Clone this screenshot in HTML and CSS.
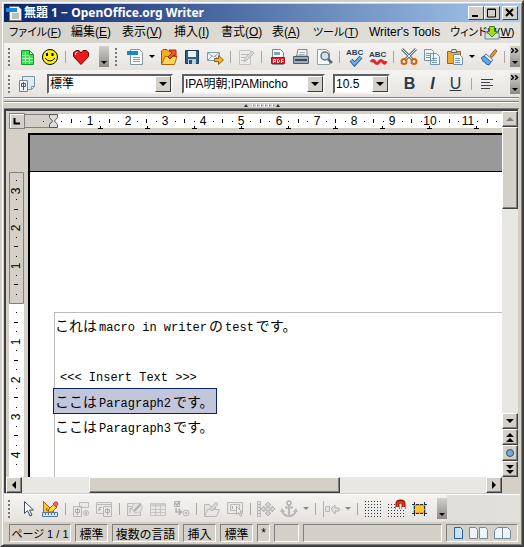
FILE: index.html
```html
<!DOCTYPE html>
<html lang="ja">
<head>
<meta charset="utf-8">
<title>無題 1 - OpenOffice.org Writer</title>
<link rel="stylesheet" href="styles.css">
</head>
<body>
<div class="window">
  <header class="titlebar">
    <svg class="app-icon" width="16" height="16" viewBox="0 0 16 16"><path d="M3.500 1.500h9l3 3v11h-12z" fill="#f4f4f4" stroke="#777"/><path d="M0 3h11v4H0z" fill="#1690d8"/><path d="M6 9h7M6 11h7M6 13h7" stroke="#888"/></svg>
    <h1>無題 1 − OpenOffice.org Writer</h1>
    <div class="window-buttons">
      <button aria-label="最小化"><svg width="12" height="10"><path d="M2 8h6" stroke="#000" stroke-width="2"/></svg></button>
      <button aria-label="最大化"><svg width="12" height="10"><path d="M1.500 1v8h8V1zM1 1.500h9" fill="none" stroke="#000"/></svg></button>
      <button class="close" aria-label="閉じる"><svg width="12" height="10"><path d="M2 1l7 7M9 1L2 8" stroke="#000" stroke-width="2"/></svg></button>
    </div>
  </header>

  <nav class="menubar">
    <button class="kana">ファイル(<u>F</u>)</button><button>編集(<u>E</u>)</button><button>表示(<u>V</u>)</button><button>挿入(<u>I</u>)</button><button>書式(<u>O</u>)</button><button>表(<u>A</u>)</button><button class="kana">ツール(<u>T</u>)</button><button>Writer's Tools</button><button class="kana">ウィンドウ(<u>W</u>)</button>
    <svg class="update" width="16" height="14" viewBox="0 0 16 14"><path d="M1 7h14v6H1z" fill="#d9e1e5" stroke="#71838d"/><path d="M5.500.500h5v5h3L8 11 2.500 5.500h3z" fill="#a5d820" stroke="#3d8a18"/></svg>
  </nav>

  <div class="toolbar">
    <span class="grip"></span>
    <button aria-label="マクロ"><svg viewBox="0 0 20 20"><path d="M4.500 3.500h8l4 4v10h-12z" fill="#35e24b" stroke="#159a2b"/><path d="M12.500 3.500v4h4z" fill="#fff" stroke="#159a2b"/><path d="M5 8.500h7M5 11.500h11M5 14.500h11M8.500 5v12M12.500 9v8" stroke="#b8ffc0"/></svg></button>
    <button aria-label="スマイル"><svg viewBox="0 0 20 20"><circle cx="10" cy="10" r="7.500" fill="#fff200" stroke="#000"/><path d="M7 6v3M12.500 6v3" stroke="#000" stroke-width="2"/><path d="M5 11q5 6 10 0" fill="none" stroke="#000"/></svg></button>
    <span class="sep"></span>
    <button aria-label="ハート"><svg viewBox="0 0 20 20"><path d="M10 17.500L2.500 9.500V5.500l3-2h2.500L10 6l2-2.500h3l2.500 2v4z" fill="#f01818" stroke="#5a0000"/><path d="M4.500 8V6l2-1" fill="none" stroke="#fff"/></svg></button>
    <button class="overflow push" aria-label="オプション"><i></i></button>
    <span class="grip second"></span>
    <button aria-label="新規作成"><svg viewBox="0 0 20 20"><path d="M5.500 2.500h9l3 3v12h-12z" fill="#fafcfd" stroke="#8795a0"/><path d="M2 4h11v4H2z" fill="#1687ca"/><path d="M8 10.500h7M8 12.500h7M8 14.500h7" stroke="#8d9aa5"/></svg></button>
    <button class="drop" aria-label="新規作成の一覧"><i></i></button>
    <button aria-label="開く"><svg viewBox="0 0 20 20"><path d="M2.500 17V4l1.500-1.500h4l2 2h4V17z" fill="#f5ab24" stroke="#97560b"/><path d="M2.500 17.500L6 9.500h12l-2.500 8z" fill="#ffd65b" stroke="#ac6a0c"/><path d="M10 3h7v7l-2-2-4 4-2-2 4-4z" fill="#ea5a20" stroke="#a12d0c"/></svg></button>
    <button aria-label="保存"><svg viewBox="0 0 20 20"><path d="M3.500 3.500h13v13h-13z" fill="#2d5e83" stroke="#173b59"/><path d="M6 4h8v6H6z" fill="#e9f1f5"/><path d="M6 12h8v5H6z" fill="#bcd0dc"/><path d="M7 13h3v4H7z" fill="#28506e"/></svg></button>
    <button aria-label="メールで送信"><svg viewBox="0 0 20 20"><path d="M2.500 5.500h12v8h-12z" fill="#edf4fa" stroke="#8198ae"/><path d="M3 6l5.500 4L14 6M3 13l4-4M14 13l-4-4" fill="none" stroke="#8ea6bc"/><path d="M9.500 11.500h4v-3l5 4.500-5 4.500v-3h-4z" fill="#fbb526" stroke="#94600f"/></svg></button>
    <span class="sep"></span>
    <button disabled aria-label="編集"><svg class="dim" viewBox="0 0 20 20"><path d="M3.500 3.500h11v14h-11z" fill="#eee" stroke="#aaa"/><path d="M5 7.500h7M5 10.500h5M5 13.500h4" stroke="#999"/><path d="M8 15l1-4 7-7 2 2-7 7z" fill="#ccc" stroke="#999"/></svg></button>
    <span class="sep wide"></span>
    <button aria-label="PDF"><svg viewBox="0 0 20 20"><path d="M4.500 2.500h8l3 3v12h-11z" fill="#f5f8fa" stroke="#7b8b97"/><path d="M6 5h6v3H6z" fill="#8aa2b2"/><path d="M3.500 10.500h13v6h-13z" fill="#e11d25" stroke="#b4101a"/><path d="M5.500 16v-3.500h2v2h-2M9.500 16v-3.500h1l1 1v1l-1 1h-1M13.500 16v-3.500h2M13.500 14.500h2" fill="none" stroke="#fff"/></svg></button>
    <button aria-label="印刷"><svg viewBox="0 0 20 20"><path d="M5.500 9L7 2.500h9V9z" fill="#f7f9fa" stroke="#778993"/><path d="M2.500 9.500h15v7h-15z" fill="#9cabb4" stroke="#4b5e69"/><path d="M4 12h12v2H4z" fill="#384a55"/><path d="M8 5.500h6M7.500 7.500h6" stroke="#a6b4bb"/></svg></button>
    <button aria-label="プレビュー"><svg viewBox="0 0 20 20"><path d="M3.500 2.500h9l3 3v12h-12z" fill="#f8fafb" stroke="#91a1ac"/><circle cx="11" cy="9" r="4" fill="#cfe3ef" stroke="#5e7481" stroke-width="1.500"/><path d="M14 12l4 4" stroke="#526b7d" stroke-width="2.500"/></svg></button>
    <span class="sep"></span>
    <button aria-label="スペルチェック"><svg viewBox="0 0 20 20"><text x="1" y="8" class="abc">ABC</text><path d="M6 13l3.500 4L16 10" fill="none" stroke="#205a95" stroke-width="4"/><path d="M6 13l3.500 4L16 10" fill="none" stroke="#72b5ec" stroke-width="2"/></svg></button>
    <button aria-label="自動スペルチェック"><svg viewBox="0 0 20 20"><text x="1" y="10" class="abc">ABC</text><path d="M3 15q2-3 4 0t4 0 4 0 3-1" fill="none" stroke="#e3242d" stroke-width="3"/></svg></button>
    <span class="sep"></span>
    <button aria-label="切り取り"><svg viewBox="0 0 20 20"><path d="M3 2l11 11M17 2L6 13" stroke="#69757c" stroke-width="3"/><path d="M3 2l11 11M17 2L6 13" stroke="#e3e9ec"/><circle cx="5" cy="14.500" r="2.500" fill="none" stroke="#d2660c" stroke-width="2"/><circle cx="15" cy="14.500" r="2.500" fill="none" stroke="#d2660c" stroke-width="2"/></svg></button>
    <button aria-label="コピー"><svg viewBox="0 0 20 20"><path d="M2.500 2.500h7l2 2v9h-9zM8.500 6.500h6l3 3v8h-9z" fill="#edf4f8" stroke="#7794a8"/><path d="M4 6.500h5M4 8.500h4M4 10.500h4M10 11.500h5M10 13.500h5M10 15.500h5" stroke="#749bb9"/></svg></button>
    <button aria-label="貼り付け"><svg viewBox="0 0 20 20"><path d="M2.500 4.500h13v12h-13z" fill="#efa92c" stroke="#9a631a"/><path d="M6 5.500l1-3h4l1 3z" fill="#ddd" stroke="#6b6b6b"/><path d="M8.500 7.500h6l3 3v7h-9z" fill="#eff5f8" stroke="#6d8fa8"/><path d="M10 11.500h5M10 13.500h5M10 15.500h5" stroke="#749bb9"/></svg></button>
    <button class="drop" aria-label="貼り付けの一覧"><i></i></button>
    <button aria-label="書式のコピー"><svg viewBox="0 0 20 20"><path d="M11 9l5-6.500 2 1.500-5 6.500z" fill="#e3a04b" stroke="#8b5b27"/><path d="M7 7l7 6-2 2-7-6z" fill="#e4edf2" stroke="#637b8a"/><path d="M5 9l7 6-2 3-3-1-1-2-2-.500-1-2.500-1-1z" fill="#5da8e5" stroke="#2767a3"/></svg></button>
    <span class="sep"></span>
    <button class="overflow end" aria-label="その他"><svg class="more" viewBox="0 0 8 5"><path d="M0 0l2.500 2.500L0 5M4 0l2.500 2.500L4 5" fill="none" stroke="#000" stroke-width="1.500"/></svg><i></i></button>
  </div>

  <div class="toolbar format">
    <span class="grip"></span>
    <button aria-label="スタイル"><svg viewBox="0 0 20 20"><path d="M5.500 2.500h12v10l-3 3h-9z" fill="#dfeaf1" stroke="#7b94a6"/><path d="M14.500 15.500v-3h3z" fill="#fff" stroke="#7b94a6"/><path d="M2.500 6.500h8v11h-8z" fill="#eff2f4" stroke="#7a8791"/><path d="M6.500 8v8M4.500 9.500h4v3h-4z" fill="none" stroke="#4c5d69"/></svg></button>
    <label class="combo style"><select aria-label="段落スタイル"><option>標準</option></select><i></i></label>
    <label class="combo font"><select aria-label="フォント名"><option>IPA明朝;IPAMincho</option></select><i></i></label>
    <label class="combo size"><select aria-label="フォントサイズ"><option>10.5</option></select><i></i></label>
    <button class="letter push" aria-label="太字"><b>B</b></button>
    <button class="letter" aria-label="斜体"><em>I</em></button>
    <button class="letter" aria-label="下線"><u>U</u></button>
    <span class="sep"></span>
    <button aria-label="左揃え"><svg viewBox="0 0 20 20"><path d="M4 5.500h12M4 8.500h9M4 11.500h12M4 14.500h9" stroke="#39444e"/></svg></button>
    <button class="overflow end" aria-label="その他"><svg class="more" viewBox="0 0 8 5"><path d="M0 0l2.500 2.500L0 5M4 0l2.500 2.500L4 5" fill="none" stroke="#000" stroke-width="1.500"/></svg><i></i></button>
  </div>

  <div class="splitter"><svg width="36" height="5" viewBox="0 0 36 5"><path d="M0 4l2-3 2 3zM32 4l2-3 2 3z" fill="#333"/><path d="M8 2.500h22" stroke="#fff" stroke-width="3" stroke-dasharray="2 2"/><path d="M9 2.500h22" stroke="#777" stroke-width="2" stroke-dasharray="1 3"/></svg></div>

  <main class="editor">
    <div class="ruler-row">
      <button class="tab-kind" aria-label="左揃えタブ"><svg width="8" height="7"><path d="M1.500 0v5.500H7" fill="none" stroke="#000" stroke-width="2"/></svg></button>
      <div class="h-ruler"><svg id="h-ruler" height="18"></svg></div>
    </div>
    <div class="v-ruler"><svg id="v-ruler" width="15"></svg></div>
    <article class="canvas">
      <div class="page">
        <div class="text-area">
          <p>これは<span>macro in writer</span>の<span>test</span>です。</p>
          <p></p>
          <p><code>&lt;&lt;&lt; Insert Text &gt;&gt;&gt;</code></p>
          <p class="boxed">ここは<span>Paragraph2</span>です。</p>
          <p>ここは<span>Paragraph3</span>です。</p>
        </div>
      </div>
    </article>
    <div class="v-scroll">
      <button class="up off" aria-label="上へ"><i></i></button>
      <div class="thumb"></div>
      <div class="trough"></div>
      <button class="down" aria-label="下へ"><i></i></button>
      <button class="up" aria-label="前のページ"><i></i><i></i></button>
      <button aria-label="ナビゲーション"><b class="ball"></b></button>
      <button class="down" aria-label="次のページ"><i></i><i></i></button>
    </div>
    <div class="h-scroll">
      <button class="left" aria-label="左へ"><i></i></button>
      <div class="trough before"></div>
      <div class="thumb"></div>
      <div class="trough"></div>
      <button class="right" aria-label="右へ"><i></i></button>
    </div>
  </main>

  <div class="toolbar drawing">
    <div class="strip">
    <span class="grip"></span>
    <button aria-label="選択"><svg viewBox="0 0 20 20"><path d="M7.500 2.500v12l3-3 2.500 5.500 2-1-2.500-5h4z" fill="#fff" stroke="#3f4d5c"/></svg></button>
    <button aria-label="デザインモード"><svg viewBox="0 0 20 20"><path d="M3.500 2.500v12h12z" fill="#ffc42e" stroke="#b0650d"/><path d="M6.500 9v2.500H9z" fill="#fff" stroke="#b0650d"/><path d="M2.500 13.500h15v4h-15z" fill="#cee3f2" stroke="#527b9d"/><path d="M5.500 14v2M8.500 14v2M11.500 14v2M14.500 14v2" stroke="#527b9d"/><path d="M8 13l1-3 5-5 3 3-5 5z" fill="#ffd53d" stroke="#a4620e"/><path d="M13 5l2-2h2l1 2-2 3z" fill="#ef6a72" stroke="#b5414a"/></svg></button>
    <span class="sep"></span>
    <button disabled aria-label="コントロール"><svg class="dim" viewBox="0 0 20 20"><path d="M8.500 3.500h9v5h-9zM2.500 7.500h8v10h-8z" fill="#e8e8e8" stroke="#999"/><path d="M6.500 9v7M4.500 10.500h4v3h-4z" fill="none" stroke="#888"/><circle cx="15" cy="14" r="2.500" fill="#ddd" stroke="#999"/><circle cx="15" cy="14" r="1" fill="#888"/></svg></button>
    <button disabled aria-label="フォーム"><svg class="dim" viewBox="0 0 20 20"><path d="M2.500 3.500h15v11h-15zM2 5.500h16" fill="#e8e8e8" stroke="#999"/><path d="M5 12V8.500h3M5 10.500h2" fill="none" stroke="#888"/><path d="M9.500 7.500h8v10h-8z" fill="#e8e8e8" stroke="#999"/><path d="M13.500 9v7M11.500 10.500h4v3h-4z" fill="none" stroke="#888"/></svg></button>
    <span class="sep"></span>
    <button disabled aria-label="フォームナビゲータ"><svg class="dim" viewBox="0 0 20 20"><path d="M2.500 4.500h13v12h-13zM2 7.500h13" fill="#e5e5e5" stroke="#999"/><path d="M5 14v-4.500h3" fill="none" stroke="#888"/><circle cx="12" cy="9" r="5" fill="#ddd" stroke="#aaa"/><path d="M9 12l7-7" stroke="#888" stroke-width="2"/></svg></button>
    <button disabled aria-label="表"><svg class="dim" viewBox="0 0 20 20"><path d="M2.500 4.500h15v12h-15z" fill="#e9e9e9" stroke="#aaa"/><path d="M3 6h14" stroke="#bbb" stroke-width="3"/><path d="M3 10.500h14M3 13.500h14M7.500 5v12M12.500 5v12" stroke="#aaa"/></svg></button>
    <button disabled aria-label="順序"><svg class="dim" viewBox="0 0 20 20"><path d="M3.500 2.500h5v5h-5z" fill="#eee" stroke="#888"/><path d="M4 4l2 2 3-4M5 9v4h5M7.500 10l3 3-3 3" fill="none" stroke="#888" stroke-width="1.500"/><circle cx="15" cy="14" r="3" fill="#ddd" stroke="#999"/><circle cx="15" cy="14" r="1" fill="#888"/></svg></button>
    <span class="sep"></span>
    <button disabled aria-label="デザインモードで開く"><svg class="dim" viewBox="0 0 20 20"><path d="M2.500 16.500v-11h5l1 2h5v10z" fill="#ddd" stroke="#999"/><path d="M2.500 17.500l3-7h12l-3 7z" fill="#e5e5e5" stroke="#999"/><path d="M8 10l6-7 2 2-6 7z" fill="#ccc" stroke="#999"/></svg></button>
    <button disabled aria-label="自動フォーカス"><svg class="dim" viewBox="0 0 20 20"><path d="M2.500 3.500h15v11h-15zM5.500 5.500h9v6h-9z" fill="#e8e8e8" stroke="#999"/><path d="M7.500 7v3" stroke="#888"/><path d="M11.500 7.500v8l2-2 2 4 1.500-1-2-3.500h2z" fill="#eee" stroke="#888"/></svg></button>
    <span class="sep"></span>
    <button disabled aria-label="位置とサイズ"><svg class="dim" viewBox="0 0 20 20"><path d="M1.500 2.500h3v15h-3z" fill="#ddd" stroke="#999"/><path d="M2 5.500h2M2 8.500h2M2 11.500h2M2 14.500h2" stroke="#888"/><path d="M12 3l3 3h-2v3h3V7l3 3-3 3v-2h-3v3h2l-3 3-3-3h2v-3H8v2l-3-3 3-3v2h3V6H9z" fill="#ccc" stroke="#888"/></svg></button>
    <button disabled aria-label="アンカー"><svg class="dim" viewBox="0 0 20 20"><circle cx="10" cy="4" r="2" fill="none" stroke="#888" stroke-width="1.500"/><path d="M10 6v11M6 8.500h8M3 11q1 6 7 6t7-6" fill="none" stroke="#999" stroke-width="2"/><path d="M1 13l2-4 3 4zM14 13l3-4 2 4z" fill="#999"/></svg></button>
    <button class="drop faded" disabled aria-label="アンカーの一覧"><i></i></button>
    <span class="sep"></span>
    <button disabled aria-label="配置"><svg class="dim" viewBox="0 0 20 20"><path d="M2.500 2v16" stroke="#888"/><path d="M4.500 7.500h4v5h-4z" fill="#ddd" stroke="#999"/><path d="M10 10l4-4v3h4v3h-4v3z" fill="#ddd" stroke="#888"/></svg></button>
    <button class="drop faded" disabled aria-label="配置の一覧"><i></i></button>
    <span class="sep"></span>
    <button aria-label="グリッドの表示"><svg viewBox="0 0 20 20"><path d="M2 2.500h17M2 5.500h17M2 8.500h17M2 11.500h17M2 14.500h17M2 17.500h17" stroke="#2e3b49" stroke-dasharray="1 2"/></svg></button>
    <button aria-label="グリッドで位置合わせ"><svg viewBox="0 0 20 20"><path d="M2 5.500h8M2 8.500h8M2 11.500h17M2 14.500h17M2 17.500h17" stroke="#2e3b49" stroke-dasharray="1 2"/><path d="M11.500 10V4.500q0-2 3-2t3 2V10" fill="none" stroke="#8c1206" stroke-width="4"/><path d="M11.500 9V4.500q0-1.500 3-1.500t3 1.500V9" fill="none" stroke="#ee3416" stroke-width="2"/><path d="M10 9h3M16 9h3" stroke="#fff" stroke-width="2"/></svg></button>
    <button aria-label="ガイド"><svg viewBox="0 0 20 20"><path d="M5 6h11v8H5z" fill="#ffc62b" stroke="#e67b17"/><path d="M3 5.500h15M3 14.500h15M5.500 3v14M15.500 3v14" stroke="#22303d" stroke-dasharray="3 1"/></svg></button>
    <button class="overflow push" aria-label="オプション"><i></i></button>
    </div>
  </div>

  <footer class="statusbar">
    <span class="kana">ページ 1 / 1</span><span>標準</span><span>複数の言語</span><span>挿入</span><span>標準</span><span>*</span><span></span><span></span>
    <span class="views"><svg width="64" height="12" viewBox="0 0 64 12"><g fill="#edf4fa" stroke="#76899a"><path d="M4.500.500h6l2 2v9h-8z" fill="#c9e1fa" stroke="#245f9d"/><path d="M19.500.500h6l2 2v9h-8zM29.500.500h6l2 2v9h-8zM52.500.500h-5l-3 3v8h8zM52.500.500h5l3 3v8h-8z"/></g></svg></span>
  </footer>
</div>
<script src="rulers.js"></script>
</body>
</html>
```
FILE: styles.css
```css
* { box-sizing: border-box; }
body {
  margin: 0;
  font: 12px "Liberation Sans", "Noto Sans CJK JP", sans-serif;
  color: #000;
}
button { font: inherit; color: inherit; border: 0; padding: 0; background: none; }
svg { display: block; flex: none; }
i { display: block; width: 0; height: 0; }

.window {
  height: 100vh;
  min-height: 320px;
  display: flex;
  flex-direction: column;
  padding: 2px;
  background: #d4d0c8;
  border: 2px solid;
  border-color: #d4d0c8 #404040 #404040 #d4d0c8;
  box-shadow: inset 1px 1px #fff, inset -1px -1px #808080;
}

.titlebar {
  flex: none;
  height: 18px;
  display: flex;
  align-items: center;
  padding: 0 2px;
  background: linear-gradient(to right, #0a246a, #a6caf0);
  color: #fff;
}
.titlebar h1 {
  flex: 1;
  margin: 0 0 0 2px;
  font: bold 12px/18px "Noto Sans", "Noto Sans CJK JP", sans-serif;
  white-space: nowrap;
}
.window-buttons { display: flex; }
.window-buttons button {
  width: 16px;
  height: 14px;
  padding: 1px;
  background: #d4d0c8;
  border: 1px solid;
  border-color: #fff #404040 #404040 #fff;
}
.window-buttons .close { margin-left: 2px; }

.menubar {
  flex: none;
  position: relative;
  height: 21px;
  display: grid;
  grid-template-columns: 62px 51px 52px 47px 51px 41px 56px 81px 1fr;
  padding-left: 5px;
  background: linear-gradient(to right, #d6d3cb, #e4e2dd);
  font-feature-settings: "palt";
}
.menubar button { text-align: left; white-space: nowrap; line-height: 21px; overflow: hidden; }
.menubar .kana, .statusbar .kana { font-size: 11px; }
.update { position: absolute; right: 20px; top: 4px; }

.toolbar {
  flex: none;
  height: 27px;
  display: flex;
  align-items: center;
  background: linear-gradient(#f5f3f1, #e6e3df);
}
.toolbar button { flex: none; width: 23px; height: 23px; display: flex; align-items: center; justify-content: center; }
.toolbar button svg { width: 20px; height: 20px; }
.toolbar .grip {
  flex: none;
  width: 2px;
  height: 18px;
  margin: 0 5px 0 4px;
  background: repeating-linear-gradient(#777 0 2px, transparent 2px 4px);
}
.toolbar .second { margin: 0 6px; }
.toolbar .sep { flex: none; width: 1px; height: 12px; margin: 0 3px 0 4px; background: #aaa7a3; }
.toolbar .wide { margin-right: 4px; }
.toolbar .drop { width: 11px; }
.drop i, .overflow i { border: 3px solid transparent; border-top-color: #000; border-bottom: 0; }
.faded i { border-top-color: #888; }
.toolbar .overflow {
  width: 10px;
  height: 21px;
  flex-direction: column;
  justify-content: flex-end;
  padding-bottom: 3px;
  background: linear-gradient(#d2cfcc, #8d8b88);
}
.toolbar .end { margin-left: auto; gap: 8px; }
.toolbar .overflow .more { width: 8px; height: 5px; }
.toolbar .push { margin-left: 7px; }
.dim { opacity: 0.6; }
.abc { font: bold 8px "Liberation Sans", sans-serif; fill: #263f55; }

.format button:first-of-type { margin-right: 9px; }
.combo {
  position: relative;
  flex: 0 1 auto;
  height: 20px;
  border: 2px solid;
  border-color: #606060 #f4f4f4 #f4f4f4 #606060;
  background: #fff;
}
.combo.style { width: 126px; margin-right: 9px; }
.combo.font { width: 143px; margin-right: 8px; }
.combo.size { width: 57px; }
.combo select {
  display: block;
  width: 100%;
  height: 16px;
  padding: 0 18px 0 1px;
  border: 0;
  appearance: none;
  background: none;
  font: inherit;
  font-feature-settings: "palt";
  color: #000;
}
.combo i {
  position: absolute;
  right: 0;
  top: 0;
  width: 16px;
  height: 16px;
  pointer-events: none;
  background: #d4d0c8;
  border: 1px solid;
  border-color: #fff #404040 #404040 #fff;
}
.combo i::after {
  content: "";
  display: block;
  margin: 5px 3px;
  border: 4px solid transparent;
  border-top-color: #000;
  border-bottom: 0;
}
.format .letter { font: 16px "Liberation Sans", sans-serif; color: #2d3947; }
.format em { font-weight: bold; }
.format .push { margin-left: 8px; }

.splitter {
  flex: none;
  height: 12px;
  margin-right: 1px;
  padding-top: 4px;
  display: flex;
  justify-content: center;
  background: linear-gradient(#808080 1px, #fff 1px 2px, #d4d0c8 2px 4px, #808080 4px 5px, #fff 5px 6px, #d4d0c8 6px 11px, #808080 11px);
}
.splitter svg { margin-top: 2px; }

.editor {
  flex: 1;
  min-height: 0;
  display: grid;
  grid-template: 22px minmax(0, 1fr) 16px / 22px minmax(0, 1fr) 16px;
  margin-right: 2px;
  border: solid #404040;
  border-width: 2px 0 0 2px;
}
.ruler-row { grid-column: 1 / 3; display: flex; align-items: center; padding: 0 0 2px 3px; }
.tab-kind {
  width: 16px;
  height: 16px;
  display: flex;
  align-items: center;
  justify-content: center;
  border: 1px solid #808080;
  box-shadow: inset 1px 1px #fff;
}
.h-ruler {
  flex: 1;
  height: 14px;
  min-width: 0;
  background: linear-gradient(to right, #d4d0c8 29px, #fff 29px);
}
.h-ruler svg { width: 100%; }
.v-ruler { padding: 39px 4px 0 3px; overflow: hidden; }
.v-ruler svg { height: 100%; background: #fff; }
#h-ruler text, #v-ruler text { font: 12px "Liberation Sans", sans-serif; text-anchor: middle; }

.canvas {
  display: flex;
  flex-direction: column;
  padding-top: 36px;
  border: solid #000;
  border-width: 2px 0 0 2px;
  background: #999;
  overflow: hidden;
}
.page { flex: 1; padding: 140px 0 0 24px; border-top: 1px solid #000; background: #fff; }
.text-area {
  height: 100%;
  border: solid #bbb;
  border-width: 1px 0 0 1px;
  font: 14px/25px "Noto Sans CJK JP", sans-serif;
  text-autospace: no-autospace;
  white-space: nowrap;
}
.text-area p { height: 25px; margin: 0; }
.text-area span, .text-area code { font: 12px "Liberation Mono", monospace; }
.text-area span { margin: 0 2px; }
.text-area code { margin-left: 5px; }
.text-area .boxed {
  width: max-content;
  height: 26px;
  line-height: 24px;
  margin-left: -2px;
  padding: 0 2px 0 1px;
  border: 1px solid #0a246a;
  background: #c2c6da;
}

.v-scroll, .h-scroll { display: flex; }
.v-scroll { grid-area: 1 / 3 / 3 / 4; flex-direction: column; }
.h-scroll { grid-area: 3 / 1 / 4 / 3; }
.v-scroll button, .h-scroll button, .thumb {
  flex: none;
  width: 16px;
  height: 16px;
  display: flex;
  flex-direction: column;
  align-items: center;
  justify-content: center;
  gap: 1px;
  background: #d4d0c8;
  border: 1px solid;
  border-color: #fff #404040 #404040 #fff;
  box-shadow: inset -1px -1px #808080;
}
.trough { flex: 1; background: #e8e7e3; }
.v-scroll .thumb { height: 82px; }
.h-scroll .thumb { width: auto; flex: 251 1 0; }
.h-scroll .trough { flex: 147 1 0; }
.h-scroll .before { flex: 67 1 0; }
.v-scroll i, .h-scroll i { border: 4px solid transparent; }
.v-scroll .up i { border-top: 0; border-bottom-color: #000; }
.v-scroll .off i { border-bottom-color: #808080; }
.v-scroll .down i { border-bottom: 0; border-top-color: #000; }
.h-scroll .left i { border-left: 0; border-right-color: #000; }
.h-scroll .right i { border-right: 0; border-left-color: #000; }
.ball { width: 8px; height: 8px; border-radius: 50%; border: 1px solid #31516c; background: #74a9d0; }

.drawing { height: 28px; margin-top: 1px; border-top: 1px solid #fff; background: linear-gradient(to right, #d8d5ce, #e2e0db); }
.strip { display: flex; align-items: center; height: 100%; background: linear-gradient(#f5f3f1, #e6e3df); }

.statusbar {
  flex: none;
  height: 21px;
  display: grid;
  grid-template-columns: 62px 33px 67px 33px 33px 13px 25px 1fr 72px;
  gap: 4px;
  padding: 2px 2px 1px 5px;
  font-feature-settings: "palt";
}
.statusbar span {
  display: flex;
  align-items: center;
  justify-content: center;
  height: 18px;
  border: 1px solid;
  border-color: #808080 #fff #fff #808080;
  white-space: nowrap;
  overflow: hidden;
}
```
FILE: rulers.js
```js
// One centimetre at 96 dpi.
const CM = 96 / 2.54;

// Numbers on whole centimetres, a tick on halves and a dot on quarters.
function scale(zero, length) {
  let out = "";
  for (let q = Math.ceil(-zero / CM * 4) + 1; zero + q * CM / 4 < length; q++) {
    const x = Math.round(zero + q * CM / 4);
    if (q === 0) continue;
    if (q % 4 === 0) out += `<text x="${x}" y="11">${Math.abs(q / 4)}</text>`;
    else if (q % 2 === 0) out += `<path d="M${x} 5h1v4h-1z"/>`;
    else out += `<path d="M${x} 7h1v1h-1z"/>`;
  }
  return out;
}

const h = document.getElementById("h-ruler");
const width = h.getBoundingClientRect().width;
let stops = "";
for (let x = 75; x < width; x += 47) stops += `<path d="M${x} 12h1v2h2v1h-5v-1h2z"/>`;
h.innerHTML = '<path d="M0 .500h28M0 13.500h28" stroke="#808080"/>' + scale(27, width) + stops +
  '<path d="M24.500.500h8v3l-3 3.500 3 3.500v3h-8v-3l3-3.500-3-3.500z" fill="#ddd" stroke="#555"/>';

const v = document.getElementById("v-ruler");
const height = v.getBoundingClientRect().height;
v.innerHTML = '<path d="M.500.500h14v131H.500z" fill="#d4d0c8" stroke="#808080"/>' +
  `<g transform="translate(0 ${height}) rotate(-90)">${scale(height - 132, height)}</g>`;
```
